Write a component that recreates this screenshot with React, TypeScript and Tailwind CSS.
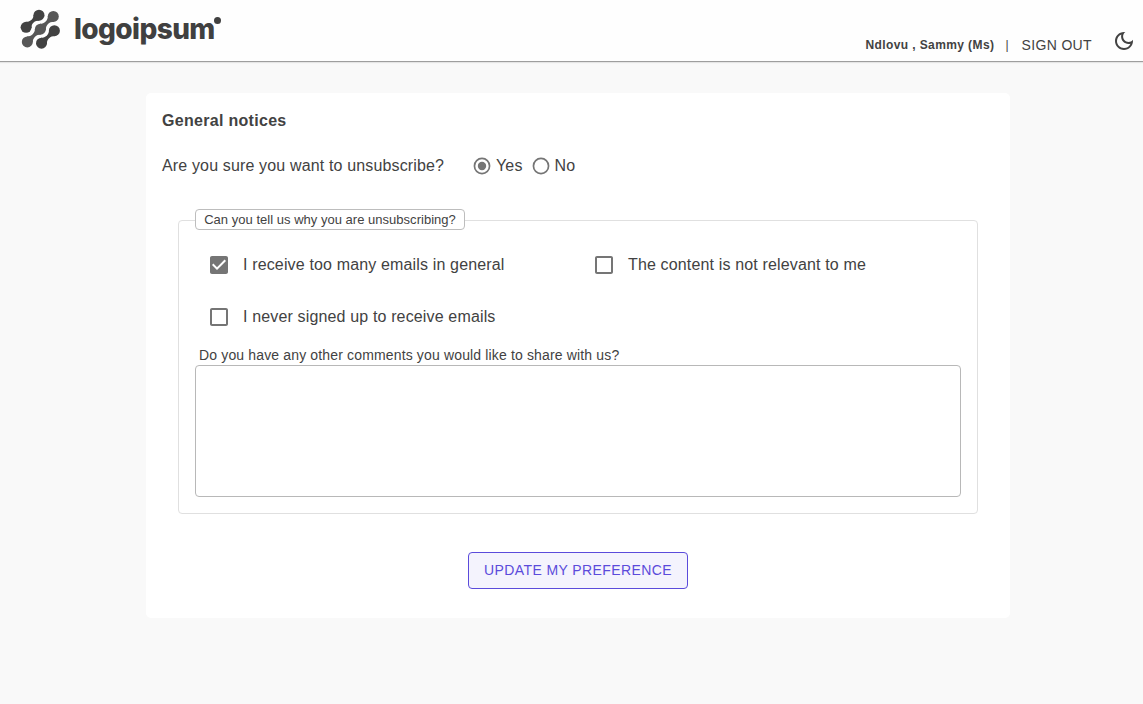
import { useState } from "react";

function LogoMark() {
  return (
    <svg width="42" height="42" viewBox="19 8 42 42" className="block shrink-0">
      <g fill="#424242">
        <circle cx="39" cy="15.200" r="5.500" />
        <circle cx="26.100" cy="27.300" r="5.500" />
        <path d="M33.600 14.500C33.600 19.200 30.200 21.900 25.500 21.900L31.400 28C31.400 23.300 34.800 20.600 39.500 20.600Z" />
        <circle cx="54.400" cy="30.700" r="5.500" />
        <circle cx="41.500" cy="43.200" r="5.500" />
        <path d="M49 30C49 34.700 45.700 37.800 41 37.800L46.900 43.900C46.900 39.200 50.200 36.100 54.900 36.100Z" />
      </g>
      <g fill="#585858">
        <circle cx="53.300" cy="16.400" r="5.500" />
        <circle cx="40.400" cy="29.200" r="5.500" />
        <circle cx="27.300" cy="41.900" r="5.500" />
        <path d="M47.900 15.700C47.900 20.400 44.600 23.800 39.900 23.800L45.800 29.900C45.800 25.200 49.100 21.800 53.800 21.800Z" />
        <path d="M35 28.500C35 33.200 31.500 36.500 26.800 36.500L32.700 42.600C32.700 37.900 36.200 34.600 40.900 34.600Z" />
      </g>
    </svg>
  );
}

function Logo() {
  return (
    <div className="flex h-[61px] items-start pl-[19px] pt-2">
      <LogoMark />
      <span className="ml-[13px] mt-[3px] w-[140px] whitespace-nowrap font-['Inter',sans-serif] text-[28px] font-extrabold leading-9 tracking-[-0.600px] text-[#404040]">
        logoipsum
      </span>
      <span className="mt-[9px] size-[7px] rounded-full bg-[#404040]" />
    </div>
  );
}

function Radio({ label, checked, onSelect }: { label: string; checked: boolean; onSelect: () => void }) {
  return (
    <button type="button" role="radio" aria-checked={checked} onClick={onSelect} className="flex items-center gap-[4px]">
      <svg width="20" height="20" viewBox="2 2 20 20" className="block" fill="#757575">
        <path d="M12 3.600a8.400 8.400 0 1 0 0 16.800a8.400 8.400 0 0 0 0-16.800zm0 15.100a6.700 6.700 0 1 1 0-13.400a6.700 6.700 0 0 1 0 13.400z" />
        {checked && <circle cx="12" cy="12" r="4.200" />}
      </svg>
      <span>{label}</span>
    </button>
  );
}

function Checkbox({ label, initial = false }: { label: string; initial?: boolean }) {
  const [checked, setChecked] = useState(initial);
  return (
    <button
      type="button"
      role="checkbox"
      aria-checked={checked}
      onClick={() => setChecked(!checked)}
      className="flex h-6 items-center gap-3 text-left tracking-[0.150px]"
    >
      <svg width="24" height="24" viewBox="0 0 24 24" className="block" fill="#757575">
        {checked ? (
          <path d="M19 3H5c-1.110 0-2 .9-2 2v14c0 1.100.89 2 2 2h14c1.110 0 2-.9 2-2V5c0-1.100-.89-2-2-2zm-9 14l-5-5 1.410-1.410L10 14.170l7.590-7.590L19 8l-9 9z" />
        ) : (
          <path d="M19 5v14H5V5h14m0-2H5c-1.100 0-2 .9-2 2v14c0 1.100.9 2 2 2h14c1.100 0 2-.9 2-2V5c0-1.100-.9-2-2-2z" />
        )}
      </svg>
      <span>{label}</span>
    </button>
  );
}

export default function App() {
  const [answer, setAnswer] = useState("Yes");
  return (
    <div className="min-h-screen bg-[#f9f9f9] font-['Liberation_Sans',Arial,sans-serif] text-base text-[#424242]">
      <header className="flex h-[62px] justify-between border-b border-[#9e9e9e] bg-[#fefefe] shadow-[0_1px_1px_rgba(0,0,0,0.08)]">
        <Logo />
        <div className="flex items-start pr-[7px]">
          <span className="mt-[37px] text-xs font-bold leading-4 tracking-[0.400px]">Ndlovu , Sammy (Ms)</span>
          <span className="ml-[11px] mt-[37px] text-xs leading-4">|</span>
          <button type="button" className="ml-[13px] mt-[35px] text-sm leading-5 tracking-[0.350px]">SIGN OUT</button>
          <svg width="24" height="24" viewBox="0 0 24 24" className="ml-5 mt-[29px] block" fill="#424242">
            <path d="M9.370 5.510C9.190 6.150 9.100 6.820 9.100 7.500c0 4.080 3.320 7.400 7.400 7.400.68 0 1.350-.09 1.990-.27C17.450 17.190 14.930 19 12 19c-3.860 0-7-3.140-7-7 0-2.930 1.810-5.450 4.370-6.490zM12 3c-4.970 0-9 4.030-9 9s4.030 9 9 9 9-4.030 9-9c0-.46-.04-.92-.1-1.360-.98 1.370-2.580 2.260-4.400 2.260-2.980 0-5.400-2.420-5.400-5.400 0-1.810.89-3.420 2.260-4.400-.44-.06-.9-.1-1.360-.1z" />
          </svg>
        </div>
      </header>

      <main className="ml-[146px] mt-[31px] flex h-[525px] w-[864px] flex-col rounded-[5px] bg-white px-4 pt-4">
        <h1 className="font-bold leading-6 tracking-[0.300px]">General notices</h1>
        <div className="mt-[21px] flex h-6 items-center tracking-[0.150px]">
          <span className="w-[310px]">Are you sure you want to unsubscribe?</span>
          <div role="radiogroup" className="flex gap-2">
            <Radio label="Yes" checked={answer === "Yes"} onSelect={() => setAnswer("Yes")} />
            <Radio label="No" checked={answer === "No"} onSelect={() => setAnswer("No")} />
          </div>
        </div>

        <section className="mx-4 mt-[42px] h-[294px] rounded border border-[#e0e0e0] px-4">
          <div className="-mt-3 flex h-[21px] w-[270px] items-center justify-center rounded border border-[#bdbdbd] bg-white text-[13px] leading-4 tracking-[0.020px]">
            Can you tell us why you are unsubscribing?
          </div>
          <div className="mt-[23px] grid grid-cols-[385px_1fr] gap-y-7 pl-3">
            <Checkbox label="I receive too many emails in general" initial />
            <Checkbox label="The content is not relevant to me" />
            <Checkbox label="I never signed up to receive emails" />
          </div>
          <label htmlFor="comments" className="mt-4 block pl-1 text-sm leading-5 tracking-[0.150px]">
            Do you have any other comments you would like to share with us?
          </label>
          <textarea id="comments" className="block h-[132px] w-full resize-none rounded border border-[#b8b8b8] bg-white p-2" />
        </section>

        <button
          type="button"
          className="mt-[38px] h-[37px] w-[220px] self-center rounded border border-[#5b4bdb] bg-[#f4f3fd] pb-0.5 text-sm tracking-[0.400px] text-[#5b4bdb]"
        >
          UPDATE MY PREFERENCE
        </button>
      </main>
    </div>
  );
}
